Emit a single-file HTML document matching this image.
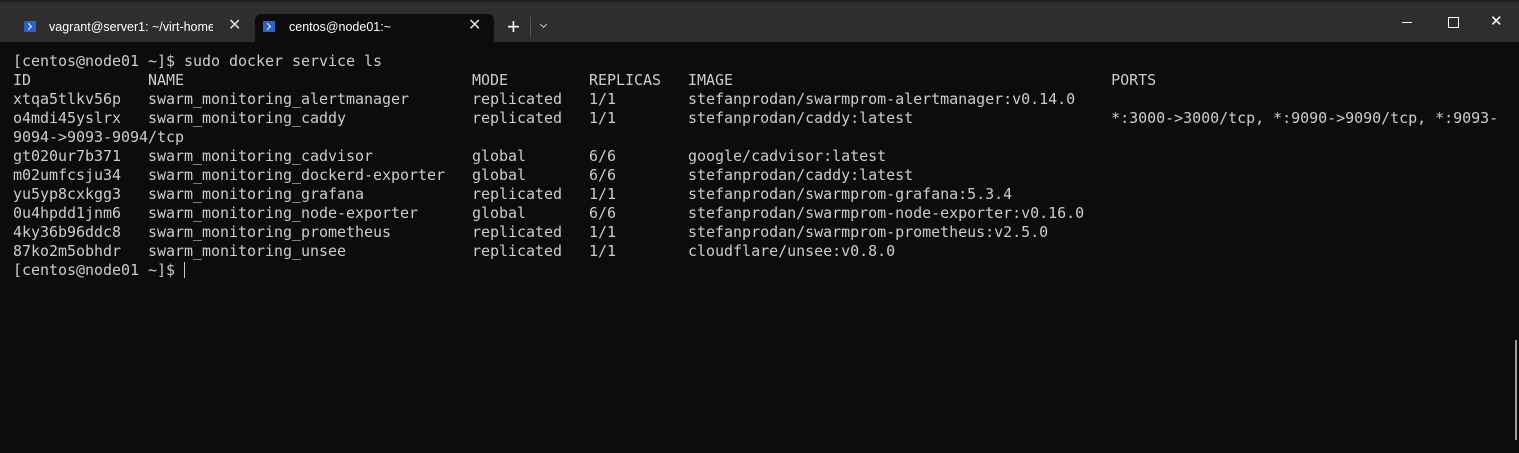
<!DOCTYPE html>
<html><head><style>
body{margin:0;width:1519px;height:453px;background:#0c0c0c;overflow:hidden;position:relative;font-family:"Liberation Sans",sans-serif}
#top{position:absolute;left:0;top:0;width:1519px;height:42px;background:#2e2e2e}
#strip{position:absolute;left:0;top:0;width:1519px;height:2px;background:#1f1f1f}
.tab{position:absolute;top:14px;height:28px;color:#fff;font-size:12.5px}
#t1{left:10px;width:245px}
#t2{left:255px;width:239px;background:#0c0c0c;border-radius:6px 6px 0 0}
.ico{position:absolute;left:14px;top:7px;width:12px;height:11px;background:#2f62c9;border-radius:1px}
.ico::after{content:"";position:absolute;left:2px;top:3px;width:4px;height:4px;border-right:1.5px solid #fff;border-top:1.5px solid #fff;transform:rotate(45deg)}
.lbl{position:absolute;left:39px;top:6px;white-space:nowrap;overflow:hidden}
.x{position:absolute;top:1px;font-size:16px;color:#ddd}
pre{position:absolute;left:13px;top:52px;margin:0;font-family:"DejaVu Sans Mono","Liberation Mono",monospace;font-size:15px;line-height:19px;color:#cccccc;letter-spacing:-0.03px}
.cur{display:inline-block;width:1px;height:16px;background:#ccc;vertical-align:-3px}
</style></head><body>
<div id="top"></div><div id="strip"></div>
<div class="tab" id="t1"><div class="ico"></div><div class="lbl" style="width:164px">vagrant@server1: ~/virt-homew</div><div class="x" style="left:218px">✕</div></div>
<div class="tab" id="t2"><div class="ico" style="left:8px"></div><div class="lbl" style="left:34px">centos@node01:~</div><div class="x" style="left:213px">✕</div></div>
<div style="position:absolute;left:507px;top:14px;color:#fff;font-size:22px">+</div>
<div style="position:absolute;left:530px;top:17px;width:1px;height:20px;background:#555"></div>
<div style="position:absolute;left:541px;top:22px;width:4px;height:4px;border-right:1px solid #ccc;border-bottom:1px solid #ccc;transform:rotate(45deg)"></div>
<div style="position:absolute;left:1402px;top:22px;width:10px;height:1px;background:#fff"></div>
<div style="position:absolute;left:1448px;top:17px;width:9px;height:9px;border:1px solid #fff"></div>
<div style="position:absolute;left:1490px;top:12px;color:#fff;font-size:15px">✕</div>
<div style="position:absolute;left:1515px;top:340px;width:2px;height:100px;background:#9a9a9a"></div>
<pre>[centos@node01 ~]$ sudo docker service ls
ID             NAME                                MODE         REPLICAS   IMAGE                                          PORTS
xtqa5tlkv56p   swarm_monitoring_alertmanager       replicated   1/1        stefanprodan/swarmprom-alertmanager:v0.14.0
o4mdi45yslrx   swarm_monitoring_caddy              replicated   1/1        stefanprodan/caddy:latest                      *:3000-&gt;3000/tcp, *:9090-&gt;9090/tcp, *:9093-
9094-&gt;9093-9094/tcp
gt020ur7b371   swarm_monitoring_cadvisor           global       6/6        google/cadvisor:latest
m02umfcsju34   swarm_monitoring_dockerd-exporter   global       6/6        stefanprodan/caddy:latest
yu5yp8cxkgg3   swarm_monitoring_grafana            replicated   1/1        stefanprodan/swarmprom-grafana:5.3.4
0u4hpdd1jnm6   swarm_monitoring_node-exporter      global       6/6        stefanprodan/swarmprom-node-exporter:v0.16.0
4ky36b96ddc8   swarm_monitoring_prometheus         replicated   1/1        stefanprodan/swarmprom-prometheus:v2.5.0
87ko2m5obhdr   swarm_monitoring_unsee              replicated   1/1        cloudflare/unsee:v0.8.0
[centos@node01 ~]$ <span class="cur"></span></pre>
</body></html>
